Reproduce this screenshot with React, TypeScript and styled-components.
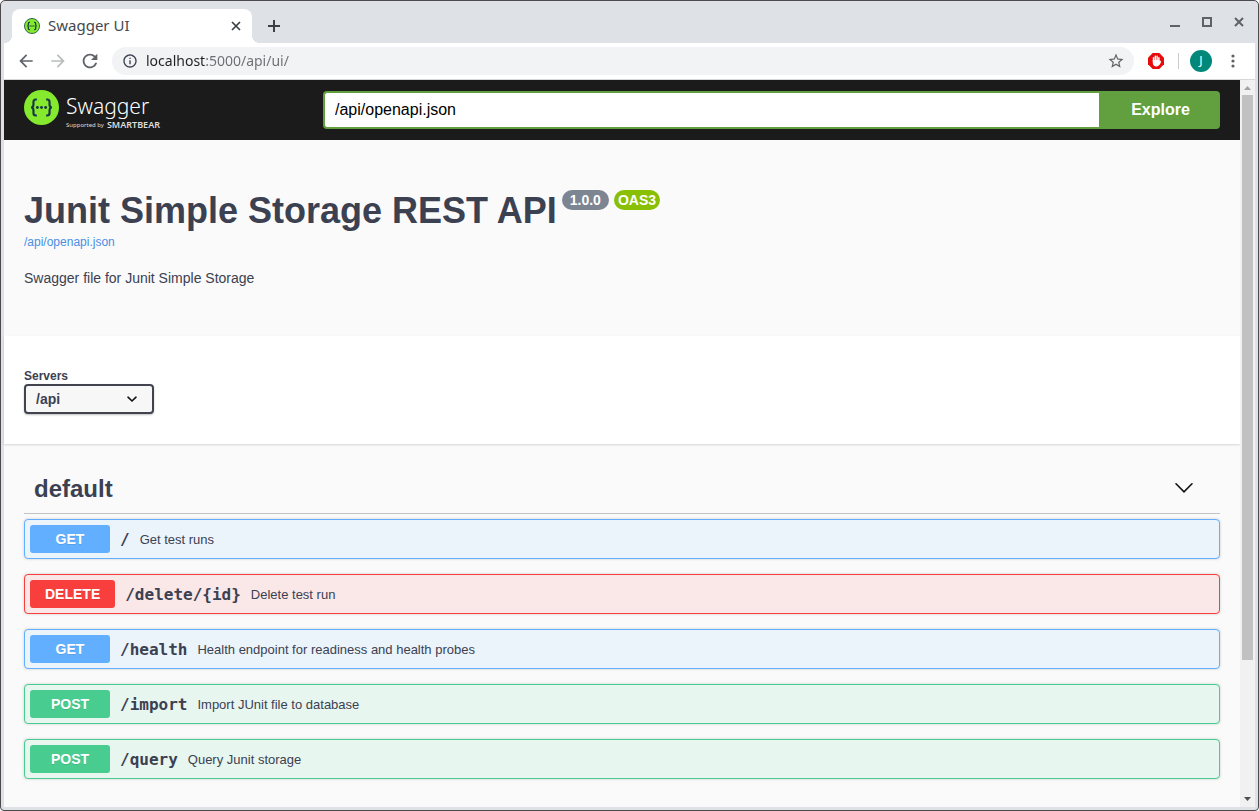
import React from "react";
import styled, { createGlobalStyle, css } from "styled-components";

const SANS = '"Liberation Sans", Arial, sans-serif';
const CHROME = '"Noto Sans", sans-serif';
const MONO = '"DejaVu Sans Mono", monospace';
const INK = "#3b4151";
const FRAME = "#dee1e6";

const GlobalStyle = createGlobalStyle`
  *, *::before, *::after { box-sizing: border-box; }
  body { margin: 0; background: #fff; font-family: ${SANS}; color: ${INK}; }
  h1, h2, p, ul { margin: 0; padding: 0; }
  button, input, select { font-family: inherit; color: inherit; margin: 0; }
  button { border: 0; padding: 0; background: none; cursor: pointer; }
  svg { display: block; flex: none; }
`;

/* Browser window */

const Window = styled.div`
  display: flex;
  flex-direction: column;
  min-height: 100vh;
  padding: 0 3px 3px;
  border: 1px solid #4d4a4e;
  border-radius: 5px 5px 4px 4px;
  background: ${FRAME};
`;

const TabStrip = styled.header`
  display: flex;
  align-items: flex-end;
  height: 42px;
  padding: 0 0 0 8px;
`;

const footCurve = css`
  content: "";
  position: absolute;
  bottom: 0;
  width: 8px;
  height: 8px;
`;

const Tab = styled.div`
  position: relative;
  display: flex;
  align-items: center;
  gap: 8px;
  width: 240px;
  height: 34px;
  padding: 0 8px 0 12px;
  border-radius: 8px 8px 0 0;
  background: #fff;

  &::before {
    ${footCurve}
    left: -8px;
    background: radial-gradient(circle at 0 0, transparent 8px, #fff 8px);
  }
  &::after {
    ${footCurve}
    right: -8px;
    background: radial-gradient(circle at 100% 0, transparent 8px, #fff 8px);
  }
`;

const TabTitle = styled.span`
  flex: 1;
  padding-bottom: 2px;
  font: 15px/20px ${CHROME};
  color: #45494d;
`;

const IconButton = styled.button<{ $size?: number; $color?: string }>`
  display: grid;
  place-items: center;
  flex: none;
  width: ${(p) => p.$size ?? 32}px;
  height: ${(p) => p.$size ?? 32}px;
  color: ${(p) => p.$color ?? "#5f6368"};
`;

const NewTabSlot = styled.div`
  flex: 1;
  padding: 0 0 1px 6px;
`;

const WindowControls = styled.div`
  display: flex;
  align-self: flex-start;
  padding: 5px 0 0;
`;

const Toolbar = styled.div`
  display: flex;
  align-items: center;
  height: 37px;
  padding: 0 6px;
  border-bottom: 1px solid #d5d7da;
  background: #fff;
`;

const AddressBar = styled.div`
  display: flex;
  align-items: center;
  flex: 1;
  height: 28px;
  margin: 0 6px;
  padding: 0 2px 0 10px;
  border-radius: 14px;
  background: #f1f3f4;
`;

/* The host part of the address is dark, the rest is dimmed. */
const AddressInput = styled.input`
  flex: 1;
  min-width: 0;
  height: 24px;
  margin-left: 8px;
  padding: 0 0 2px;
  border: 0;
  outline: 0;
  font: 14px/20px ${CHROME};
  color: transparent;
  caret-color: #202124;
  background: linear-gradient(to right, #202124 59px, #6b6f74 59px);
  background-clip: text;
  -webkit-background-clip: text;
`;

const Separator = styled.span`
  width: 1px;
  height: 16px;
  margin: 0 6px;
  background: #c9cccf;
`;

const Avatar = styled.button`
  width: 22px;
  height: 22px;
  margin: 0 5px;
  border-radius: 50%;
  background: #00897b;
  font: 12px/22px ${CHROME};
  color: #fff;
`;

const Viewport = styled.div`
  display: flex;
  flex: 1;
`;

const Page = styled.main`
  flex: 1;
  min-width: 0;
  background: #fafafa;
`;

const Scrollbar = styled.div`
  display: flex;
  flex-direction: column;
  width: 15px;
  background: #f1f1f1;
`;

const ScrollTrack = styled.div`
  flex: 1;
  padding: 0 2px;
`;

const ScrollThumb = styled.div`
  height: 81%;
  background: #c1c1c1;
`;

/* Swagger page */

const TopBar = styled.form`
  display: flex;
  align-items: center;
  height: 60px;
  padding: 0 20px;
  background: #1b1b1b;
`;

const Logo = styled.a`
  display: flex;
  gap: 7px;
  width: 299px;
  height: 40px;
  color: #fff;
  text-decoration: none;
`;

const LogoWords = styled.span`
  display: flex;
  flex-direction: column;
  padding-top: 2px;
`;

const LogoName = styled.span`
  font: 300 21px/28px ${CHROME};
`;

const LogoTagline = styled.span`
  display: flex;
  gap: 3px;
  font: 6px/10px ${CHROME};
  color: #ddd;

  b {
    font: 600 9px/10px ${CHROME};
  }
`;

const SpecUrl = styled.input`
  flex: 1;
  min-width: 0;
  height: 38px;
  padding: 0 10px;
  border: 2px solid #62a03f;
  border-right: 0;
  border-radius: 4px 0 0 4px;
  outline: 0;
  background: #fff;
  font: 16px/20px ${SANS};
  color: #000;
`;

const ExploreButton = styled.button`
  width: 121px;
  height: 38px;
  padding-left: 2px;
  border-radius: 0 4px 4px 0;
  background: #62a03f;
  font: bold 16px/20px ${SANS};
  color: #fff;
`;

const Info = styled.section`
  padding: 50px 20px;
`;

const TitleRow = styled.div`
  display: flex;
  align-items: flex-start;
  gap: 5px;
`;

const Title = styled.h1`
  font: bold 36px/41px ${SANS};
`;

const Badge = styled.span<{ $color: string; $pad: number }>`
  padding: 2px ${(p) => p.$pad}px;
  border-radius: 10px;
  background: ${(p) => p.$color};
  font: bold 14px/16px ${SANS};
  color: #fff;
`;

const SpecLink = styled.a`
  display: block;
  margin-top: 4px;
  font: 12px/14px ${SANS};
  color: #4990e2;
  text-decoration: none;
`;

const Description = styled.p`
  margin-top: 21px;
  font: 14px/16px ${SANS};
`;

const Servers = styled.section`
  padding: 33px 20px 30px;
  background: #fff;
  box-shadow: 0 1px 2px rgba(0, 0, 0, 0.15);
`;

const ServersLabel = styled.label`
  display: block;
  font: bold 12px/15px ${SANS};
`;

const SelectBox = styled.div`
  display: inline-grid;
  grid-template-columns: 130px;
  align-items: center;
  vertical-align: top;

  > * {
    grid-area: 1 / 1;
  }
  svg {
    justify-self: end;
    margin-right: 16px;
    pointer-events: none;
  }
`;

const Select = styled.select`
  appearance: none;
  height: 30px;
  padding: 0 40px 0 10px;
  border: 2px solid #41444e;
  border-radius: 4px;
  background: #f7f7f7;
  box-shadow: 0 1px 2px rgba(0, 0, 0, 0.25);
  font: bold 14px/20px ${SANS};
`;

const Operations = styled.section`
  padding: 20px 20px 28px;
`;

const TagHeading = styled.h2`
  border-bottom: 1px solid rgba(59, 65, 81, 0.3);
`;

const TagButton = styled.button`
  display: flex;
  align-items: center;
  justify-content: space-between;
  width: 100%;
  height: 49px;
  padding: 0 26px 0 10px;
  font: bold 24px/28px ${SANS};

  svg {
    margin-bottom: 2px;
  }
`;

const OperationList = styled.ul`
  display: flex;
  flex-direction: column;
  gap: 15px;
  padding-top: 5px;
  list-style: none;
`;

const tones = {
  GET: { main: "#61affe", tint: "#ebf3fb" },
  DELETE: { main: "#f93e3e", tint: "#fae7e7" },
  POST: { main: "#49cc90", tint: "#e8f6f0" },
};
type Method = keyof typeof tones;

const Operation = styled.button<{ $method: Method }>`
  display: flex;
  align-items: center;
  width: 100%;
  padding: 5px;
  border: 1px solid ${(p) => tones[p.$method].main};
  border-radius: 4px;
  background: ${(p) => tones[p.$method].tint};
  box-shadow: 0 0 3px rgba(0, 0, 0, 0.19);
  text-align: left;
`;

const MethodLabel = styled.span<{ $method: Method }>`
  min-width: 80px;
  padding: 6px 15px;
  border-radius: 3px;
  background: ${(p) => tones[p.$method].main};
  font: bold 14px/16px ${SANS};
  color: #fff;
  text-align: center;
  text-shadow: 0 1px 0 rgba(0, 0, 0, 0.1);
`;

const Path = styled.span`
  padding: 2px 10px 0;
  font: bold 16px/20px ${MONO};
`;

const Summary = styled.span`
  padding-top: 2px;
  font: 13px/16px ${SANS};
`;

const operations: { method: Method; path: string; summary: string }[] = [
  { method: "GET", path: "/", summary: "Get test runs" },
  { method: "DELETE", path: "/delete/{id}", summary: "Delete test run" },
  { method: "GET", path: "/health", summary: "Health endpoint for readiness and health probes" },
  { method: "POST", path: "/import", summary: "Import JUnit file to database" },
  { method: "POST", path: "/query", summary: "Query Junit storage" },
];

/* Icons */

const Glyph = ({ d, size }: { d: string; size: number }) => (
  <svg width={size} height={size} viewBox="0 0 24 24" fill="currentColor" aria-hidden="true">
    <path d={d} />
  </svg>
);

const BACK = "M20 11H7.83l5.59-5.59L12 4l-8 8 8 8 1.41-1.41L7.83 13H20v-2z";
const FORWARD = "M4 11h12.17l-5.59-5.59L12 4l8 8-8 8-1.41-1.41L16.17 13H4v-2z";
const RELOAD =
  "M17.65 6.35A7.96 7.96 0 0 0 12 4c-4.42 0-7.99 3.58-7.99 8s3.57 8 7.99 8c3.73 0 6.84-2.55 7.73-6h-2.08A5.99 5.99 0 0 1 12 18c-3.31 0-6-2.69-6-6s2.69-6 6-6c1.66 0 3.14.69 4.22 1.78L13 11h7V4l-2.35 2.35z";
const INFO =
  "M11 17h2v-6h-2v6zm1-15C6.48 2 2 6.48 2 12s4.48 10 10 10 10-4.48 10-10S17.52 2 12 2zm0 18c-4.41 0-8-3.59-8-8s3.59-8 8-8 8 3.59 8 8-3.59 8-8 8zM11 9h2V7h-2v2z";
const STAR =
  "M22 9.24l-7.19-.62L12 2 9.19 8.63 2 9.24l5.46 4.73L5.82 21 12 17.27 18.18 21l-1.63-7.03L22 9.24zM12 15.4l-3.76 2.27 1-4.28-3.32-2.88 4.38-.38L12 6.1l1.71 4.04 4.38.38-3.32 2.88 1 4.28L12 15.4z";

const SwaggerMark = ({ size, ring }: { size: number; ring?: boolean }) => (
  <svg width={size} height={size} viewBox="0 0 34 34" aria-hidden="true">
    <circle cx="17" cy="17" r={ring ? 16 : 17} fill="#85ea2d" stroke={ring ? "#2b5c50" : "none"} strokeWidth="2" />
    <g fill="none" stroke="#173647" strokeWidth={ring ? 2.6 : 2.1}>
      <path d="M12.5 9.2h-1c-1.7 0-2.3.9-2.3 2.4v2.6c0 1.7-.7 2.8-2.3 2.8 1.600 0 2.300 1.100 2.300 2.800v2.600c0 1.500.6 2.400 2.300 2.400h1" />
      <path d="M21.500 9.200h1c1.700 0 2.300.9 2.300 2.400v2.600c0 1.700.7 2.800 2.300 2.800-1.600 0-2.300 1.100-2.300 2.800v2.600c0 1.500-.6 2.400-2.300 2.400h-1" />
    </g>
    <g fill="#173647">
      <circle cx="13" cy="17" r="1.400" />
      <circle cx="17" cy="17" r="1.400" />
      <circle cx="21" cy="17" r="1.400" />
    </g>
  </svg>
);

const StopHand = () => (
  <svg width="16" height="16" viewBox="0 0 16 16" aria-hidden="true">
    <path d="M4.700 0h6.600L16 4.700v6.600L11.300 16H4.700L0 11.300V4.700z" fill="#e60c0c" />
    <path d="M5.500 8.500V4.700M7.300 8V3.200M9.100 8V3.200M10.900 9V4.700" stroke="#fff" strokeWidth="1.400" strokeLinecap="round" />
    <path d="M4.800 7h6.800v3c0 2.100-1.300 3.500-3.300 3.500S4.800 12.100 4.800 10zM11 10.500l1-2.300c.3-.6 1.100-.4 1 .3-.3 1.600-.9 2.900-2.200 4z" fill="#fff" />
  </svg>
);

const ScrollArrow = ({ down }: { down?: boolean }) => (
  <svg width="15" height="15" viewBox="0 0 15 15" aria-hidden="true">
    <path d={down ? "M4 5h7L7.500 9z" : "M4 10h7L7.500 6z"} fill={down ? "#505050" : "#a3a3a3"} />
  </svg>
);

export default function App() {
  return (
    <>
      <GlobalStyle />
      <Window>
        <TabStrip>
          <Tab>
            <SwaggerMark size={16} ring />
            <TabTitle>Swagger UI</TabTitle>
            <IconButton $size={16} $color="#3c4043" aria-label="Close tab">
              <svg width="10" height="10" viewBox="0 0 10 10" stroke="currentColor" strokeWidth="1.700">
                <path d="M1 1l8 8M9 1l-8 8" />
              </svg>
            </IconButton>
          </Tab>
          <NewTabSlot>
            <IconButton $color="#3c4043" aria-label="New tab">
              <svg width="12" height="12" viewBox="0 0 12 12" stroke="currentColor" strokeWidth="2">
                <path d="M6 0v12M0 6h12" />
              </svg>
            </IconButton>
          </NewTabSlot>
          <WindowControls>
            <IconButton aria-label="Minimize">
              <svg width="10" height="10" viewBox="0 0 10 10" fill="currentColor">
                <path d="M0 8h10v2H0z" />
              </svg>
            </IconButton>
            <IconButton aria-label="Maximize">
              <svg width="10" height="10" viewBox="0 0 10 10" fill="none" stroke="currentColor" strokeWidth="2">
                <path d="M1 1h8v8H1z" />
              </svg>
            </IconButton>
            <IconButton aria-label="Close">
              <svg width="10" height="10" viewBox="0 0 10 10" stroke="currentColor" strokeWidth="2">
                <path d="M1 1l8 8M9 1l-8 8" />
              </svg>
            </IconButton>
          </WindowControls>
        </TabStrip>

        <Toolbar>
          <IconButton aria-label="Back"><Glyph d={BACK} size={20} /></IconButton>
          <IconButton $color="#babcbe" aria-label="Forward"><Glyph d={FORWARD} size={20} /></IconButton>
          <IconButton aria-label="Reload"><Glyph d={RELOAD} size={22} /></IconButton>
          <AddressBar>
            <Glyph d={INFO} size={16} />
            <AddressInput aria-label="Address" defaultValue="localhost:5000/api/ui/" />
            <IconButton aria-label="Bookmark this page"><Glyph d={STAR} size={18} /></IconButton>
          </AddressBar>
          <IconButton aria-label="Ad blocker"><StopHand /></IconButton>
          <Separator />
          <Avatar aria-label="Profile J">J</Avatar>
          <IconButton aria-label="Menu">
            <svg width="4" height="14" viewBox="0 0 4 14" fill="currentColor">
              <circle cx="2" cy="2" r="1.600" />
              <circle cx="2" cy="7" r="1.600" />
              <circle cx="2" cy="12" r="1.600" />
            </svg>
          </IconButton>
        </Toolbar>

        <Viewport>
          <Page>
            <TopBar onSubmit={(e) => e.preventDefault()}>
              <Logo href="#">
                <SwaggerMark size={35} />
                <LogoWords>
                  <LogoName>Swagger</LogoName>
                  <LogoTagline>
                    Supported by <b>SMARTBEAR</b>
                  </LogoTagline>
                </LogoWords>
              </Logo>
              <SpecUrl aria-label="Specification URL" defaultValue="/api/openapi.json" />
              <ExploreButton type="submit">Explore</ExploreButton>
            </TopBar>

            <Info>
              <TitleRow>
                <Title>Junit Simple Storage REST API</Title>
                <Badge $color="#7d8492" $pad={8}>1.0.0</Badge>
                <Badge $color="#89bf04" $pad={4}>OAS3</Badge>
              </TitleRow>
              <SpecLink href="#">/api/openapi.json</SpecLink>
              <Description>Swagger file for Junit Simple Storage</Description>
            </Info>

            <Servers>
              <ServersLabel htmlFor="servers">Servers</ServersLabel>
              <SelectBox>
                <Select id="servers" defaultValue="/api">
                  <option>/api</option>
                </Select>
                <svg width="12" height="8" viewBox="0 0 12 8" fill="none" stroke="#111" strokeWidth="1.600" aria-hidden="true">
                  <path d="M2 2.200L6 6l4-3.800" strokeLinecap="round" />
                </svg>
              </SelectBox>
            </Servers>

            <Operations>
              <TagHeading>
                <TagButton aria-expanded="true">
                  default
                  <svg width="20" height="12" viewBox="0 0 20 12" fill="none" stroke="#111" strokeWidth="1.600" aria-hidden="true">
                    <path d="M2 1.800l8 8 8-8" strokeLinecap="round" />
                  </svg>
                </TagButton>
              </TagHeading>
              <OperationList>
                {operations.map((op) => (
                  <li key={op.path}>
                    <Operation $method={op.method} aria-expanded="false">
                      <MethodLabel $method={op.method}>{op.method}</MethodLabel>
                      <Path>{op.path}</Path>
                      <Summary>{op.summary}</Summary>
                    </Operation>
                  </li>
                ))}
              </OperationList>
            </Operations>
          </Page>
          <Scrollbar>
            <ScrollArrow />
            <ScrollTrack>
              <ScrollThumb />
            </ScrollTrack>
            <ScrollArrow down />
          </Scrollbar>
        </Viewport>
      </Window>
    </>
  );
}
